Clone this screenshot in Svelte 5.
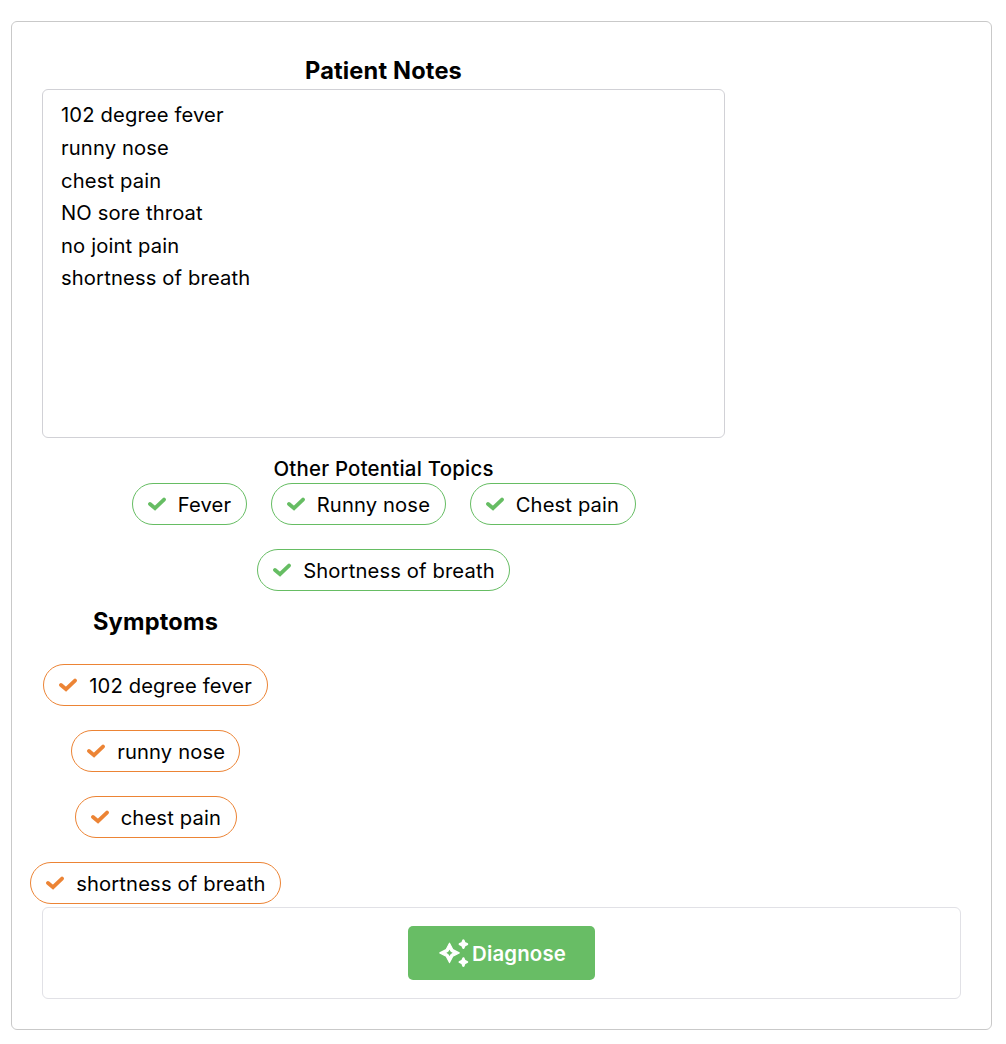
<script>
  let notes = $state('102 degree fever\nrunny nose\nchest pain\nNO sore throat\nno joint pain\nshortness of breath');
  const topics = [
    { label: 'Fever', width: 115 },
    { label: 'Runny nose', width: 175 },
    { label: 'Chest pain', width: 166 },
    { label: 'Shortness of breath', width: 253 },
  ];
  const symptoms = [
    { label: '102 degree fever', width: 225 },
    { label: 'runny nose', width: 169 },
    { label: 'chest pain', width: 162 },
    { label: 'shortness of breath', width: 251 },
  ];
</script>

{#snippet chip(item, tone)}
  <div class="chip {tone}" style:width="{item.width}px">
    <svg class="check" viewBox="0 0 18 14" aria-hidden="true"><path d="M2 7 7 11.2 16 2.6" /></svg>
    <span>{item.label}</span>
  </div>
{/snippet}

<main class="card">
  <section class="notes">
    <h2>Patient Notes</h2>
    <textarea bind:value={notes} spellcheck="false" aria-label="Patient notes"></textarea>
    <h3>Other Potential Topics</h3>
    <div class="topics">
      {#each topics as item}{@render chip(item, 'green')}{/each}
    </div>
  </section>

  <section class="symptoms">
    <h2>Symptoms</h2>
    {#each symptoms as item}{@render chip(item, 'orange')}{/each}
  </section>

  <footer>
    <button>
      <svg class="sparkles" viewBox="0 0 30 28" aria-hidden="true">
        <path class="star" fill-rule="evenodd" d="M10.5 4.2 13.8 10.6 20.2 13.9 13.8 17.2 10.5 23.6 7.2 17.2 .8 13.9 7.2 10.6ZM10.5 9.4 8.9 12.3 6 13.9 8.9 15.5 10.5 18.4 12.1 15.5 15 13.9 12.1 12.3Z" />
        <path class="glint" d="M24.4 1.5 25.5 4.1 28 5.2 25.5 6.3 24.4 8.8 23.3 6.3 20.8 5.2 23.3 4.1ZM24.4 19.4 25.5 21.9 28 23 25.5 24.1 24.4 26.7 23.3 24.1 20.8 23 23.3 21.9Z" />
      </svg>
      <span>Diagnose</span>
    </button>
  </footer>
</main>

<style>
  :global(body) { background: #fff; }
  .card, .card * { box-sizing: border-box; }
  .card {
    width: 981px;
    height: 1009px;
    margin: 21px 0 0 11px;
    padding: 33px 30px 30px;
    border: 1px solid #c9c9c9;
    border-radius: 6px;
    font-family: Inter, sans-serif;
    font-size: 20.2px;
    letter-spacing: 0.14px;
    color: #000;
  }
  .notes { width: 683px; }
  h2, h3 { margin: 0; text-align: center; white-space: nowrap; }
  h2 { height: 34px; font-size: 23.6px; font-weight: 700; line-height: 32px; letter-spacing: 0.17px; }
  textarea {
    display: block;
    width: 683px;
    height: 349px;
    padding: 9.4px 18px;
    border: 1px solid #d1d1d6;
    border-radius: 6px;
    resize: none;
    outline: none;
    overflow: hidden;
    background: #fff;
    color: inherit;
    font: inherit;
    letter-spacing: inherit;
    line-height: 32.6px;
  }
  h3 { margin-top: 15px; height: 30px; font-size: 20.4px; font-weight: 500; line-height: 31px; letter-spacing: 0.23px; }
  .topics {
    display: flex;
    flex-wrap: wrap;
    justify-content: center;
    gap: 24px;
    padding: 0 80px;
  }
  .chip {
    display: flex;
    flex: none;
    align-items: center;
    height: 42px;
    padding-left: 15px;
    border: 1px solid currentColor;
    border-radius: 21px;
    white-space: nowrap;
  }
  .chip span { color: #000; margin-left: 12.2px; padding-top: 1px; }
  .green { color: #66bd63; }
  .orange { color: #ec8435; }
  .check { width: 18px; height: 14px; flex: none; fill: none; stroke: currentColor; stroke-width: 3.8; stroke-linecap: round; stroke-linejoin: miter; }
  .symptoms {
    display: flex;
    flex-direction: column;
    align-items: center;
    width: 227px;
    margin-top: 15px;
    gap: 24px;
  }
  footer {
    display: flex;
    align-items: center;
    justify-content: center;
    height: 92px;
    margin-top: 3px;
    border: 1px solid #e1e1e6;
    border-radius: 6px;
  }
  button {
    display: flex;
    align-items: center;
    justify-content: center;
    gap: 3px;
    width: 187px;
    height: 54px;
    padding: 0 0 0 2px;
    border: 0;
    border-radius: 5px;
    background: #68bd65;
    color: #fff;
    font: 600 20.4px Inter, sans-serif;
    letter-spacing: 0.15px;
  }
  .sparkles { width: 30px; height: 28px; fill: currentColor; stroke: currentColor; stroke-linejoin: round; }
  .star { stroke-width: 1.2; }
  .glint { stroke-width: 2.4; }
</style>
